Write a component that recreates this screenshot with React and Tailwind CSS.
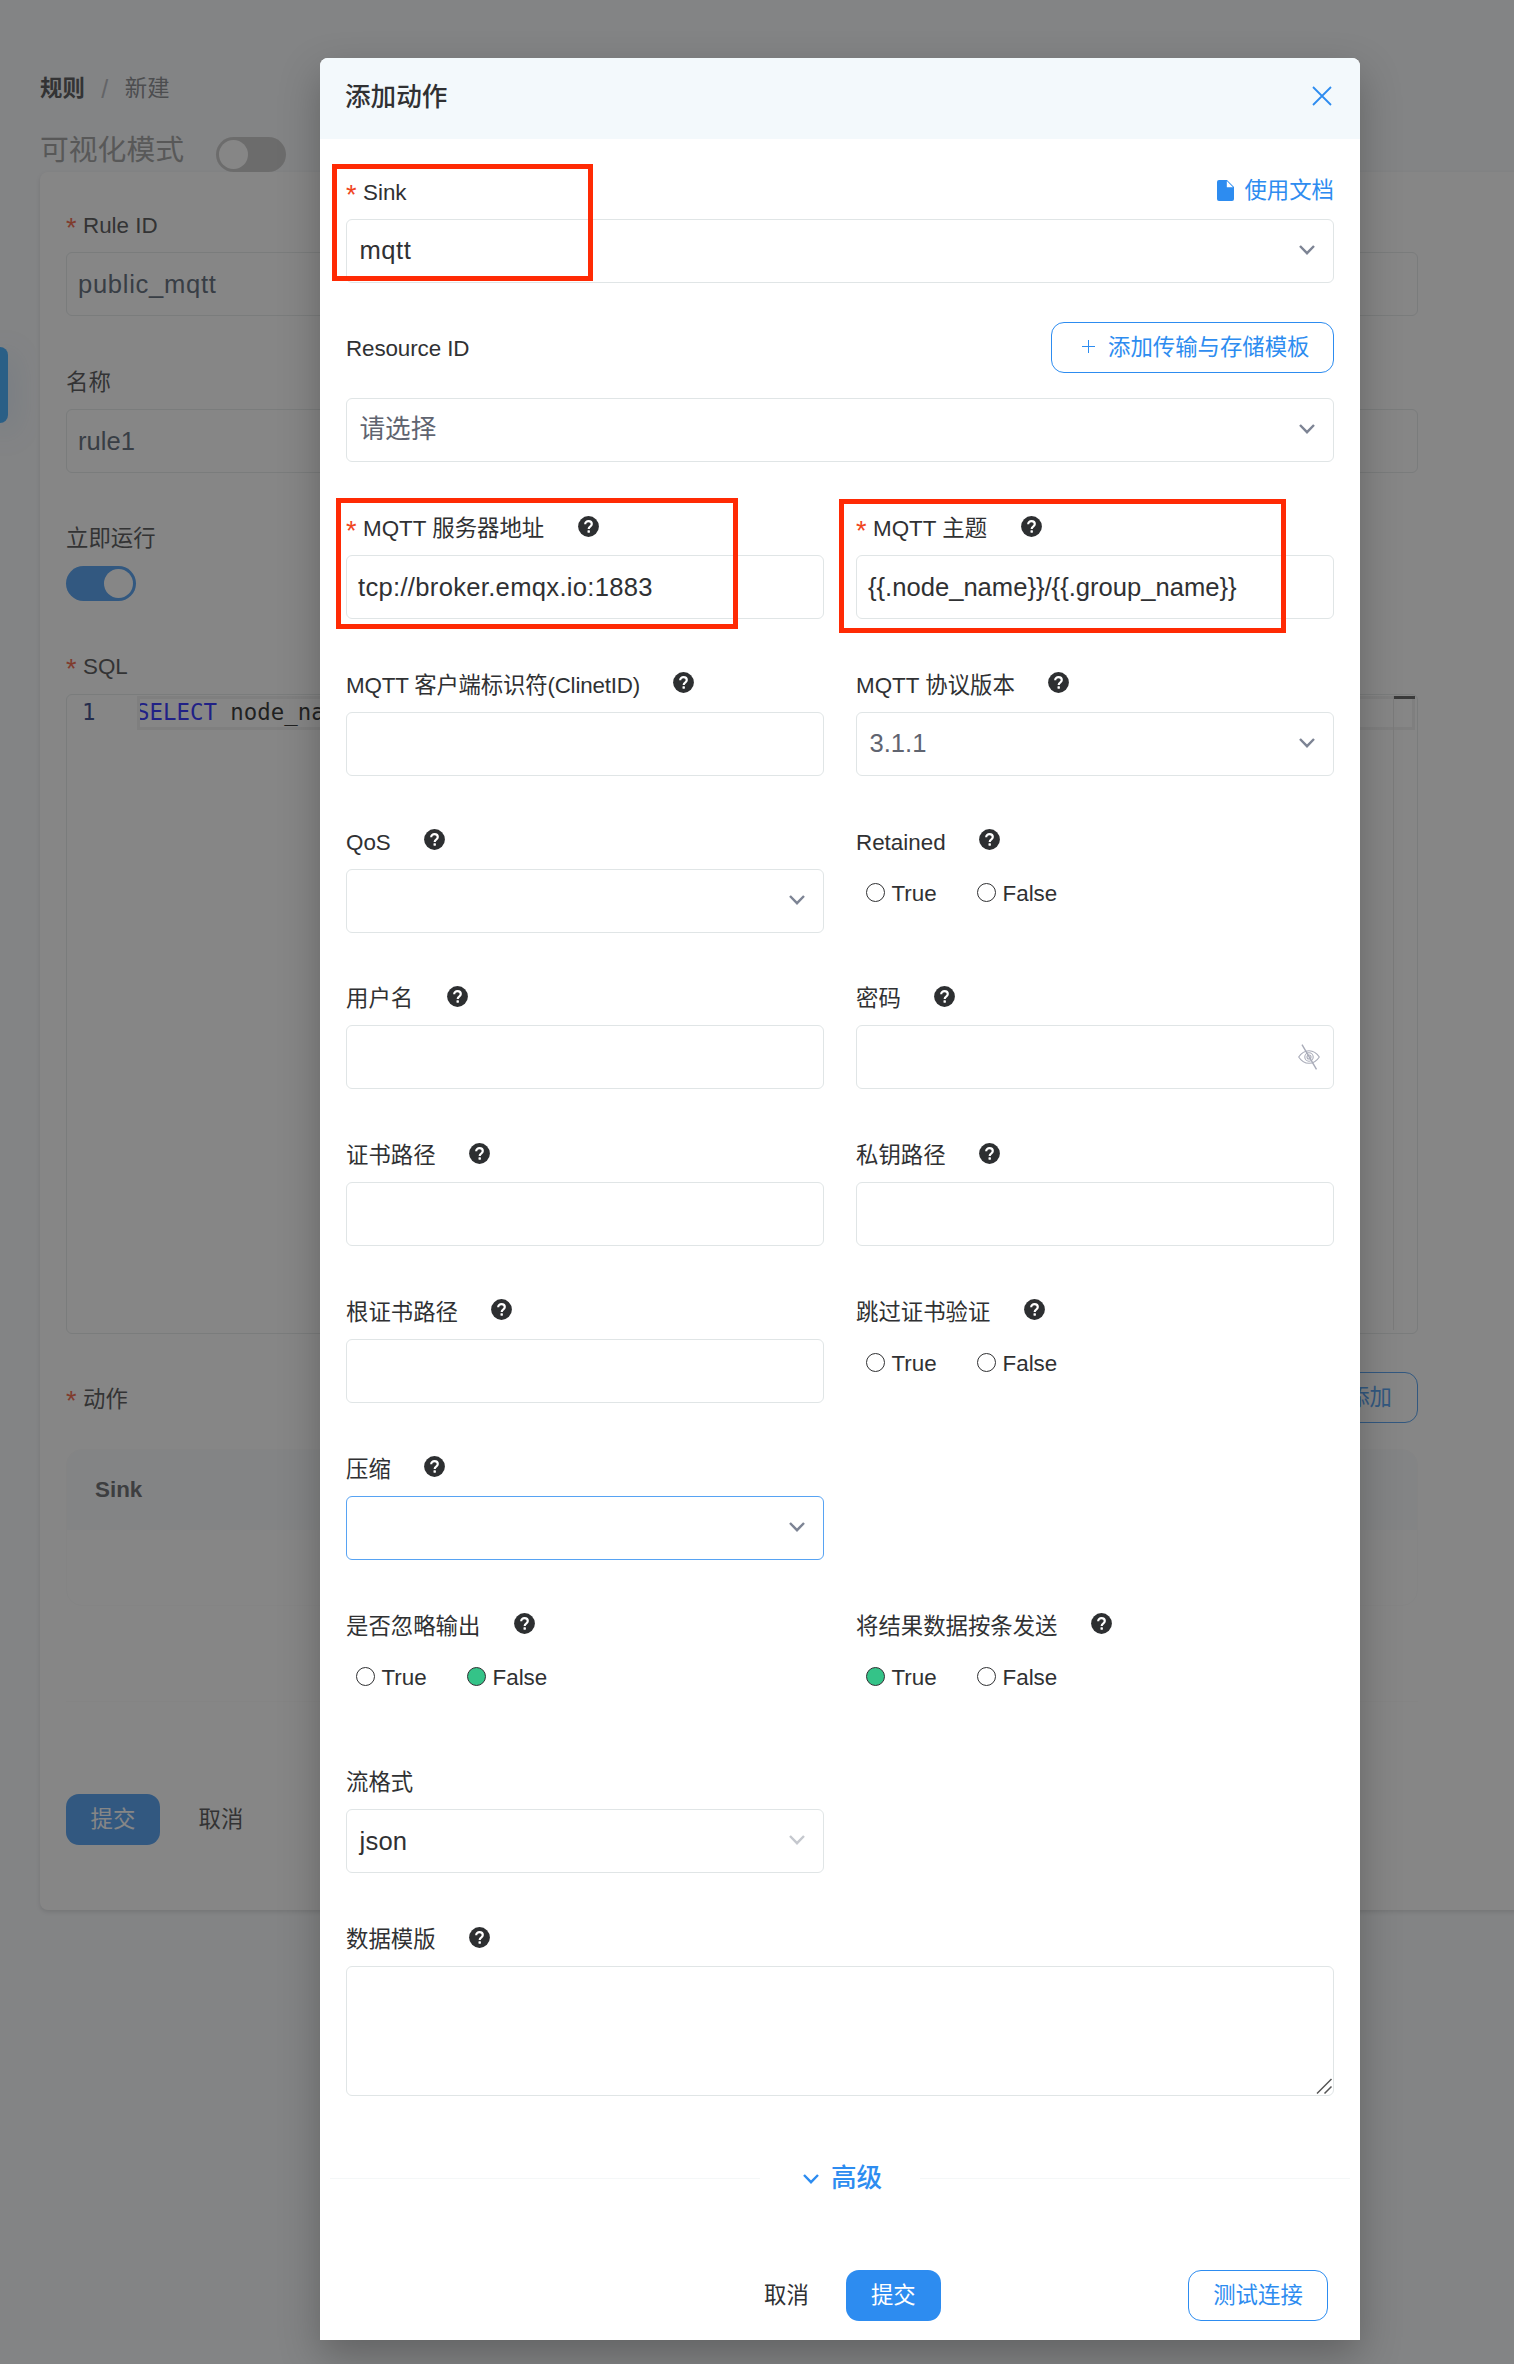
import React from "react";

const BLUE = "#2d8cf0";

function Chevron({ color = "#7d8494", size = 16, width = 2.4 }) {
  return (
    <svg width={size} height={size * 0.625} viewBox="0 0 16 10" fill="none" className="shrink-0">
      <path d="M1 1l7 7.2L15 1" stroke={color} strokeWidth={width} />
    </svg>
  );
}

function Help() {
  return (
    <svg width="21" height="21" viewBox="0 0 21 21" className="relative -top-[3px] ml-[33.5px] shrink-0">
      <circle cx="10.5" cy="10.5" r="10.4" fill="#2d2f31" />
      <path
        d="M7.2 8.200c0-1.900 1.400-3 3.300-3s3.300 1.100 3.300 2.800c0 1.300-.8 1.900-1.700 2.600-.9.600-1.400 1.200-1.400 2.400"
        fill="none"
        stroke="#fff"
        strokeWidth="2.2"
      />
      <rect x="9.5" y="14.300" width="2.400" height="2.400" rx=".4" fill="#fff" />
    </svg>
  );
}

function Star() {
  return <span className="relative top-[1.5px] w-[17px] shrink-0 text-[27px] text-[#f0461e]">*</span>;
}

function Label({ text, required, help, className = "", textClass = "" }) {
  return (
    <div className={`flex h-[42px] items-center pt-[2px] whitespace-nowrap text-[22.4px] leading-[40px] text-[#303133] ${className}`}>
      {required && <Star />}
      <span className={textClass}>{text}</span>
      {help && <Help />}
    </div>
  );
}

const box = "flex h-16 w-full items-center rounded-md border bg-white text-[25.6px] leading-none";

function Input({ value, color = "text-[#303133]", className = "" }) {
  return <div className={`${box} border-[#e0e5e6] px-[11px] pt-[2px] ${color} ${className}`}>{value}</div>;
}

function Select({ value, muted, active, disabled, className = "" }) {
  return (
    <div
      className={`${box} justify-between pr-[18px] pl-[12.5px] ${active ? "border-[#57a3f3]" : "border-[#e0e5e6]"} ${muted ? "text-[#606470]" : "text-[#303133]"}`}
    >
      <span className={className}>{value}</span>
      <span className="relative -top-px flex">
        <Chevron color={disabled ? "#c5c8ce" : "#7d8494"} />
      </span>
    </div>
  );
}

function Password() {
  return (
    <div className={`${box} justify-end border-[#e0e5e6] pr-[13px]`}>
      <svg width="22" height="26" viewBox="0 0 22 26" fill="none" stroke="#a8abb8" strokeWidth="1.1">
        <path d="M.7 13C3.400 8.800 7 6.700 11 6.700s7.600 2.100 10.300 6.300c-2.700 4.200-6.300 6.300-10.300 6.300S3.400 17.200.7 13z" />
        <circle cx="11" cy="13" r="4.200" />
        <circle cx="11" cy="13" r="2" />
        <path d="M4 .7l14.500 24.600" strokeWidth="1.400" />
      </svg>
    </div>
  );
}

function Radio({ label, checked }) {
  return (
    <div className="flex items-center">
      <span className={`size-[19px] shrink-0 rounded-full border border-[#303133] ${checked ? "bg-[#34c388]" : "bg-white"}`} />
      <span className="relative top-[2px] ml-[7px] text-[22.4px] leading-none text-[#303133]">{label}</span>
    </div>
  );
}

function Radios({ value }) {
  return (
    <div className="flex h-[47px] items-center pl-[9.5px]">
      <div className="w-[111px]">
        <Radio label="True" checked={value === true} />
      </div>
      <Radio label="False" checked={value === false} />
    </div>
  );
}

function Field({ text, required, help = true, children, className = "", textClass = "" }) {
  return (
    <div className={className}>
      <Label text={text} required={required} help={help} className="mb-1.5" textClass={textClass} />
      {children}
    </div>
  );
}

function Toggle({ on }) {
  return (
    <span className={`flex h-[35px] w-[70px] shrink-0 items-center rounded-full px-[3px] ${on ? "justify-end bg-[#2d8cf0]" : "bg-[#bfbfbf]"}`}>
      <span className="size-[29px] rounded-full bg-white" />
    </span>
  );
}

function Page() {
  return (
    <div className="h-full w-full overflow-hidden bg-[#f7f9fc] pt-[71px] pl-10">
      <div className="flex h-9 items-center text-[22.4px] leading-none">
        <span className="font-bold text-[#303133]">规则</span>
        <span className="w-[40px] text-center text-[25px] text-[#a8abb2]">/</span>
        <span className="text-[#6f7277]">新建</span>
      </div>
      <div className="mt-[25px] flex h-10 items-start">
        <span className="w-[176px] pt-[4px] text-[28.8px] leading-none text-[#8c8c8c]">可视化模式</span>
        <span className="mt-[5px]">
          <Toggle />
        </span>
      </div>
      <div className="h-[1738px] w-[1500px] rounded-lg bg-white pt-8 pl-[26px] shadow-[0_2px_4px_rgba(0,0,0,0.14)]">
        <div className="w-[1352px]">
          <Label text="Rule ID" required className="mb-1.5" />
          <Input value="public_mqtt" color="text-[#3c4b5c]" className="tracking-[0.7px]" />
          <Label text="名称" className="mt-[45px] mb-1.5" />
          <Input value="rule1" color="text-[#3c4b5c]" />
          <Label text="立即运行" className="mt-[44px] mb-[7px]" />
          <Toggle on />
          <Label text="SQL" required className="mt-[44px] mb-[7px]" />
          <div className="flex h-[640px] rounded-md border border-[#e0e5e6] pt-px pr-[2px]">
            <div className="w-[70px] pl-[15px] text-[22.4px] leading-[32px] text-[#0b216f] [font-family:'DejaVu_Sans_Mono',monospace]">1</div>
            <div className="h-[34px] flex-1 overflow-hidden border-[3px] border-[#eeeeee] text-[22.4px] leading-[26px] whitespace-nowrap text-black [font-family:'DejaVu_Sans_Mono',monospace]">
              <span className="-ml-[4px] text-[#0000ff]">SELECT</span> node_name
            </div>
            <div className="relative -ml-[22px] h-[634px] w-[22px] border-l border-[#e2e2e2]">
              <div className="h-[3px] bg-[#424242]" />
            </div>
          </div>
          <div className="mt-[38px] flex h-[51px] items-center justify-between">
            <Label text="动作" required className="relative top-px" />
            <div className="flex h-[51px] items-center rounded-[13px] border border-[#2d8cf0] px-[25px] text-[22.4px] text-[#2d8cf0]">
              <span>＋ 添加</span>
            </div>
          </div>
          <div className="mt-[26px] h-[157px] overflow-hidden rounded-2xl border border-[#f9fafb]">
            <div className="flex h-[80px] items-center bg-[#f7f9fc] pl-[28px] text-[22.4px] font-bold text-[#4a4c50]">Sink</div>
          </div>
          <div className="h-[96px] border-b border-[#f9fafb]" />
          <div className="mt-[92px] flex h-[51px] items-center text-[22.4px]">
            <div className="flex h-[51px] w-[94px] items-center justify-center rounded-[13px] bg-[#2d8cf0] text-white">提交</div>
            <span className="ml-[38.5px] text-[#303133]">取消</span>
          </div>
        </div>
      </div>
    </div>
  );
}

function Modal() {
  return (
    <div className="relative mt-[58px] ml-[320px] h-[2282px] w-[1040px] rounded-t-lg bg-white shadow-[0_16px_40px_rgba(0,0,0,0.26)]">
      <div className="flex h-[81px] items-center justify-between rounded-t-lg bg-[#f3f9fc] pr-7 pl-[25px]">
        <span className="relative -top-[1.5px] text-[25.6px] font-medium text-[#303133]">添加动作</span>
        <svg width="20" height="20" viewBox="0 0 20 20" className="relative -top-[2.5px]" stroke={BLUE} strokeWidth="1.8">
          <path d="M1 1l18 18M19 1L1 19" />
        </svg>
      </div>
      <div className="px-[26px] pt-8">
        <div className="mb-1.5 flex h-[42px] items-center justify-between">
          <Label text="Sink" required />
          <div className="relative -top-px flex items-center text-[22.4px] leading-none text-[#2d8cf0]">
            <svg width="17" height="21" viewBox="0 0 17 21" fill={BLUE} className="relative -top-px mr-2.5">
              <path d="M2 0h8l7 7v12a2 2 0 0 1-2 2H2a2 2 0 0 1-2-2V2a2 2 0 0 1 2-2z" />
              <path d="M9.800 1v6.300H16z" fill="#fff" />
            </svg>
            <span>使用文档</span>
          </div>
        </div>
        <Select value="mqtt" className="tracking-[0.5px]" />
        <div className="mt-[39px] mb-[25px] flex h-[51px] items-center justify-between">
          <Label text="Resource ID" textClass="tracking-[-0.1px]" />
          <div className="flex h-[51px] w-[283px] items-center rounded-[13px] border border-[#2d8cf0] pl-[30px] text-[22.4px] leading-none text-[#2d8cf0]">
            <svg width="13" height="13" viewBox="0 0 13 13" stroke={BLUE} strokeWidth="1" className="relative -top-px mr-[13px]">
              <path d="M6.500 0v13M0 6.500h13" />
            </svg>
            <span className="relative top-px">添加传输与存储模板</span>
          </div>
        </div>
        <Select value="请选择" muted />
        <div className="mt-[45px] grid auto-rows-[156.8px] grid-cols-2 gap-x-8">
          <Field text="MQTT 服务器地址" required>
            <Input value="tcp://broker.emqx.io:1883" className="tracking-[0.3px]" />
          </Field>
          <Field text="MQTT 主题" required>
            <Input value="{{.node_name}}/{{.group_name}}" />
          </Field>
          <Field text="MQTT 客户端标识符(ClinetID)" textClass="tracking-[-0.2px]">
            <Input />
          </Field>
          <Field text="MQTT 协议版本">
            <Select value="3.1.1" muted />
          </Field>
          <Field text="QoS">
            <Select />
          </Field>
          <Field text="Retained">
            <Radios />
          </Field>
          <Field text="用户名">
            <Input />
          </Field>
          <Field text="密码">
            <Password />
          </Field>
          <Field text="证书路径">
            <Input />
          </Field>
          <Field text="私钥路径">
            <Input />
          </Field>
          <Field text="根证书路径">
            <Input />
          </Field>
          <Field text="跳过证书验证">
            <Radios />
          </Field>
          <Field text="压缩">
            <Select active />
          </Field>
          <div />
          <Field text="是否忽略输出">
            <Radios value={false} />
          </Field>
          <Field text="将结果数据按条发送">
            <Radios value={true} />
          </Field>
          <Field text="流格式" help={false}>
            <Select value="json" disabled className="tracking-[0.2px]" />
          </Field>
          <div />
          <Field text="数据模版" className="col-span-2">
            <div className="flex h-[130px] items-end justify-end rounded-md border border-[#e0e5e6]">
              <svg width="17" height="17" viewBox="0 0 17 17" stroke="#555" strokeWidth="1.5">
                <path d="M1 15.500L15.500 1M8.500 15.500l7-7" />
              </svg>
            </div>
          </Field>
        </div>
      </div>
      <div className="mx-2.5 mt-[84px] flex h-10 items-center text-[#2d8cf0]">
        <div className="h-px flex-1 bg-[#f4f7f8]" />
        <div className="flex w-[160px] items-center justify-center pl-[5px] text-[25.6px] leading-none font-medium">
          <Chevron color={BLUE} />
          <span className="ml-3">高级</span>
        </div>
        <div className="h-px flex-1 bg-[#f4f7f8]" />
      </div>
      <div className="mt-[71px] flex h-[51px] items-center text-[22.4px] leading-none">
        <span className="ml-[444px] pt-[2px] text-[#303133]">取消</span>
        <div className="ml-[37px] flex h-[51px] w-[95px] items-center justify-center rounded-[13px] bg-[#2d8cf0] pt-[2px] text-white">提交</div>
        <div className="mr-8 ml-auto flex h-[51px] w-[140px] items-center justify-center rounded-[13px] border border-[#2d8cf0] pt-[2px] text-[#2d8cf0]">
          测试连接
        </div>
      </div>
      <div className="absolute top-[106px] left-[12px] h-[117px] w-[261px] border-[5px] border-[#ff2a04]" />
      <div className="absolute top-[440px] left-[16px] h-[131px] w-[402px] border-[5px] border-[#ff2a04]" />
      <div className="absolute top-[441px] left-[519px] h-[134px] w-[447px] border-[5px] border-[#ff2a04]" />
    </div>
  );
}

export default function App() {
  return (
    <div className="relative h-[2364px] w-[1514px] overflow-hidden [font-family:'Liberation_Sans','Noto_Sans_CJK_SC',sans-serif]">
      <Page />
      <div className="absolute top-[347px] left-0 h-[76px] w-2 rounded-r-lg bg-[#1b9dff] shadow-[0_8px_30px_rgba(27,120,220,0.35)]" />
      <div className="absolute inset-0 overflow-hidden bg-[rgba(54,54,54,0.6)]">
        <Modal />
      </div>
    </div>
  );
}
